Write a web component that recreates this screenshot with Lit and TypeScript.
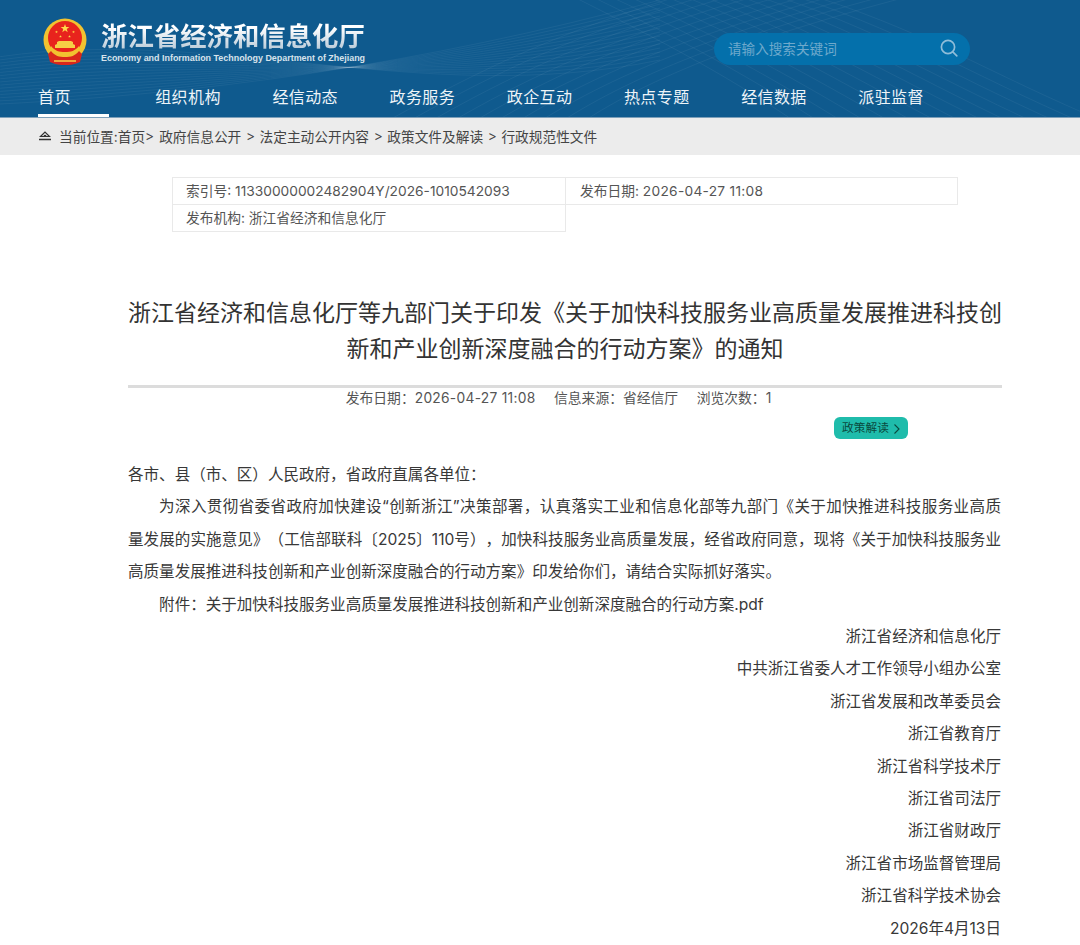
import { LitElement, html, css, svg } from "lit";
import { customElement } from "lit/decorators.js";

const NAV = ["首页","组织机构","经信动态","政务服务","政企互动","热点专题","经信数据","派驻监督"];
const CRUMBS = ["政府信息公开","法定主动公开内容","政策文件及解读","行政规范性文件"];
const SIGNERS = ["浙江省经济和信息化厅","中共浙江省委人才工作领导小组办公室","浙江省发展和改革委员会","浙江省教育厅","浙江省科学技术厅","浙江省司法厅","浙江省财政厅","浙江省市场监督管理局","浙江省科学技术协会","2026年4月13日"];

const star = (cx:number, cy:number, r:number) => {
  const pts:string[] = [];
  for (let i=0;i<10;i++){ const a=-Math.PI/2+i*Math.PI/5; const q=i%2?r*0.4:r; pts.push(`${(cx+q*Math.cos(a)).toFixed(2)},${(cy+q*Math.sin(a)).toFixed(2)}`);}
  return svg`<polygon points=${pts.join(" ")} fill="#ffd94a"/>`;
};

const wavesA = Array.from({length:16},(_,i)=>svg`<path d="M${-20} ${60+i*3} C 200 ${20+i*5}, 420 ${110-i*3}, 660 ${60-i*4}" />`);
const wavesB = Array.from({length:14},(_,i)=>svg`<path d="M${560+i*18} -10 C ${640+i*22} 30, ${720+i*20} 70, ${800+i*24} 125" />`);
const wavesC = Array.from({length:10},(_,i)=>svg`<path d="M${380+i*22} 125 C ${480+i*20} 70, ${560+i*24} 30, ${700+i*26} -10" />`);

@customElement("app-root")
export class AppRoot extends LitElement {
  static styles = css`
    :host { display:block; width:1080px; height:945px; overflow:hidden; background:#fff; color:#333;
      font-family:Inter,"Noto Sans CJK SC",sans-serif; font-weight:400; text-spacing-trim:space-all; }
    .header { position:relative; height:118px; background:#0f5a8e; box-sizing:border-box; border-bottom:1px solid #7d9fb9; overflow:hidden; }
    .waves { position:absolute; inset:0; width:1080px; height:118px; fill:none; stroke:#fff; stroke-opacity:.05; stroke-width:1; }
    .top { position:relative; display:flex; height:84px; padding-left:42px; }
    .emblem { width:47px; height:47px; margin-top:18px; flex:none; }
    .brand { margin-left:12px; margin-top:17px; display:flex; flex-direction:column; width:270px; }
    .brand-cn { font-family:"Noto Sans CJK SC",sans-serif; font-size:26.4px; line-height:36px; font-weight:700; white-space:nowrap;
      background:linear-gradient(180deg,#ffffff 30%,#bfcfdc 85%); -webkit-background-clip:text; background-clip:text; color:transparent; }
    .brand-en { font-family:"Liberation Sans",sans-serif; font-size:8.93px; line-height:11px; font-weight:700; color:#d7e3ec; white-space:nowrap; }
    .search { margin-left:343px; margin-top:33px; width:256px; height:32px; box-sizing:border-box; border-radius:16px; background:#0470ab;
      display:flex; align-items:center; justify-content:space-between; padding:0 12px 2px 14px; font-size:13.6px; color:#6fa9cc; }
    .search svg { width:18px; height:18px; display:block; }
    .nav { position:relative; display:flex; padding-left:38px; height:33px; }
    .nav-item { width:117.2px; flex:none; font-size:16px; line-height:26px; color:#eef4f8; position:relative; letter-spacing:.4px; }
    .nav-item.active::after { content:""; position:absolute; left:0; bottom:0; width:71px; height:3px; background:#fff; }
    .crumb { height:37px; box-sizing:border-box; padding:0 0 2px 39px; background:#ececec; display:flex; align-items:center; font-size:13.7px; color:#444; white-space:nowrap; }
    .crumb svg { width:12px; height:11px; margin-right:8px; flex:none; }
    .sep { margin:0 4.6px; }
    .sep.first { margin:0 5px 0 0; }
    .info { margin:22px 0 0 172px; width:786px; display:grid; grid-template-columns:394px 392px; font-size:13.75px; line-height:26px; color:#555; }
    .cell { box-sizing:border-box; border:1px solid #e9e9e9; padding-left:13px; height:28px; white-space:nowrap; }
    .cell.r { margin-left:-1px; padding-left:14px; }
    .cell.b { margin-top:-1px; }
    .date { letter-spacing:.27px; }
    .article { margin:0 78px 0 128px; }
    h1 { margin:64px 0 0; font-size:23px; line-height:35.5px; font-weight:400; text-align:center; color:#333; }
    .rule { height:3px; background:#dcdcdc; margin-top:18px; }
    .meta { display:flex; justify-content:center; gap:18.5px; font-size:13.8px; line-height:20px; color:#555; padding-right:13px; }
    .badge-row { display:flex; justify-content:flex-end; padding-right:94px; margin-top:9px; }
    .badge { width:74px; height:22px; box-sizing:border-box; padding-top:1px; border-radius:6px; background:#1fbcab; color:#0a4a3e; font-size:11.7px; line-height:21px;
      display:flex; align-items:center; justify-content:center; gap:4px; }
    .badge svg { width:7px; height:10px; }
    .body { margin:20px 1px 0 0; font-size:15.55px; line-height:32.4px; color:#383838; }
    .body p { margin:0; }
    .line { display:block; text-align:justify; text-align-last:justify; }
    .indent { text-indent:2em; }
    .right { text-align:right; }
  `;
  render() {
    return html`
      <div class="header">
        <svg class="waves" viewBox="0 0 1080 118">${wavesA}${wavesB}${wavesC}</svg>
        <div class="top">
          <svg class="emblem" viewBox="0 0 47 47">
            <circle cx="23" cy="22" r="21.5" fill="#f2c230"/>
            <circle cx="23" cy="20" r="17" fill="#e8231d"/>
            ${star(23,10.5,4.6)}${star(14.5,14,1.5)}${star(31.5,14,1.5)}${star(18.5,18.5,1.4)}${star(27.5,18.5,1.4)}
            <path d="M13 30h20v-3l-2-1v-2l-2-1H17l-2 1v2l-2 1z" fill="#f6cf45"/>
            <path d="M9 28c4 5 8 6 14 6s10-1 14-6l1 3c-3 5-9 7-15 7s-12-2-15-7z" fill="#f2c230"/>
            <path d="M6 36l3-3c4 5 8 6 14 6s10-1 14-6l3 3-2 8c-5 2.5-10 3-15 3s-10-.5-15-3z" fill="#d9261c"/>
            <path d="M12 43h22" stroke="#f6cf45" stroke-width="1.5"/>
          </svg>
          <div class="brand">
            <div class="brand-cn">浙江省经济和信息化厅</div>
            <div class="brand-en">Economy and Information Technology Department of Zhejiang</div>
          </div>
          <div class="search">
            <span>请输入搜索关键词</span>
            <svg viewBox="0 0 18 18" fill="none" stroke="#8fbdd9" stroke-width="1.7"><circle cx="8" cy="8" r="6.6"/><path d="M12.8 12.8l4 4" stroke-linecap="round"/></svg>
          </div>
        </div>
        <div class="nav">
          ${NAV.map((n,i)=>html`<div class="nav-item ${i===0?"active":""}">${n}</div>`)}
        </div>
      </div>
      <div class="crumb">
        <svg viewBox="0 0 12 11" fill="none" stroke="#333" stroke-width="1.2"><path d="M1.5 6.5L6 2l4.5 4.5z" /><path d="M4.8 5.5h2.400" /><path d="M0 9.5h12" stroke-width="1.5" /></svg>
        <span>当前位置:首页</span><span class="sep first">&gt;</span>
        ${CRUMBS.map((c,i)=>html`${i>0?html`<span class="sep">&gt;</span>`:""}<span>${c}</span>`)}
      </div>
      <div class="info">
        <div class="cell">索引号: 11330000002482904Y/2026-1010542093</div>
        <div class="cell r">发布日期: <span class="date">2026-04-27 11:08</span></div>
        <div class="cell b">发布机构: 浙江省经济和信息化厅</div>
      </div>
      <div class="article">
        <h1>浙江省经济和信息化厅等九部门关于印发《关于加快科技服务业高质量发展推进科技创新和产业创新深度融合的行动方案》的通知</h1>
        <div class="rule"></div>
        <div class="meta"><span>发布日期：<span class="date">2026-04-27 11:08</span></span><span>信息来源：省经信厅</span><span>浏览次数：1</span></div>
        <div class="badge-row"><div class="badge">政策解读<svg viewBox="0 0 7 10" fill="none" stroke="#0a4a3e" stroke-width="1.1"><path d="M1.5 .5l4.5 4.5-4.5 4.5"/></svg></div></div>
        <div class="body">
          <p>各市、县（市、区）人民政府，省政府直属各单位：</p>
          <p><span class="line indent">为深入贯彻省委省政府加快建设“创新浙江”决策部署，认真落实工业和信息化部等九部门《关于加快推进科技服务业高质</span><span class="line">量发展的实施意见》（工信部联科〔2025〕110号），加快科技服务业高质量发展，经省政府同意，现将《关于加快科技服务业</span>高质量发展推进科技创新和产业创新深度融合的行动方案》印发给你们，请结合实际抓好落实。</p>
          <p class="indent">附件：关于加快科技服务业高质量发展推进科技创新和产业创新深度融合的行动方案.pdf</p>
          ${SIGNERS.map(s=>html`<p class="right">${s}</p>`)}
        </div>
      </div>
    `;
  }
}
